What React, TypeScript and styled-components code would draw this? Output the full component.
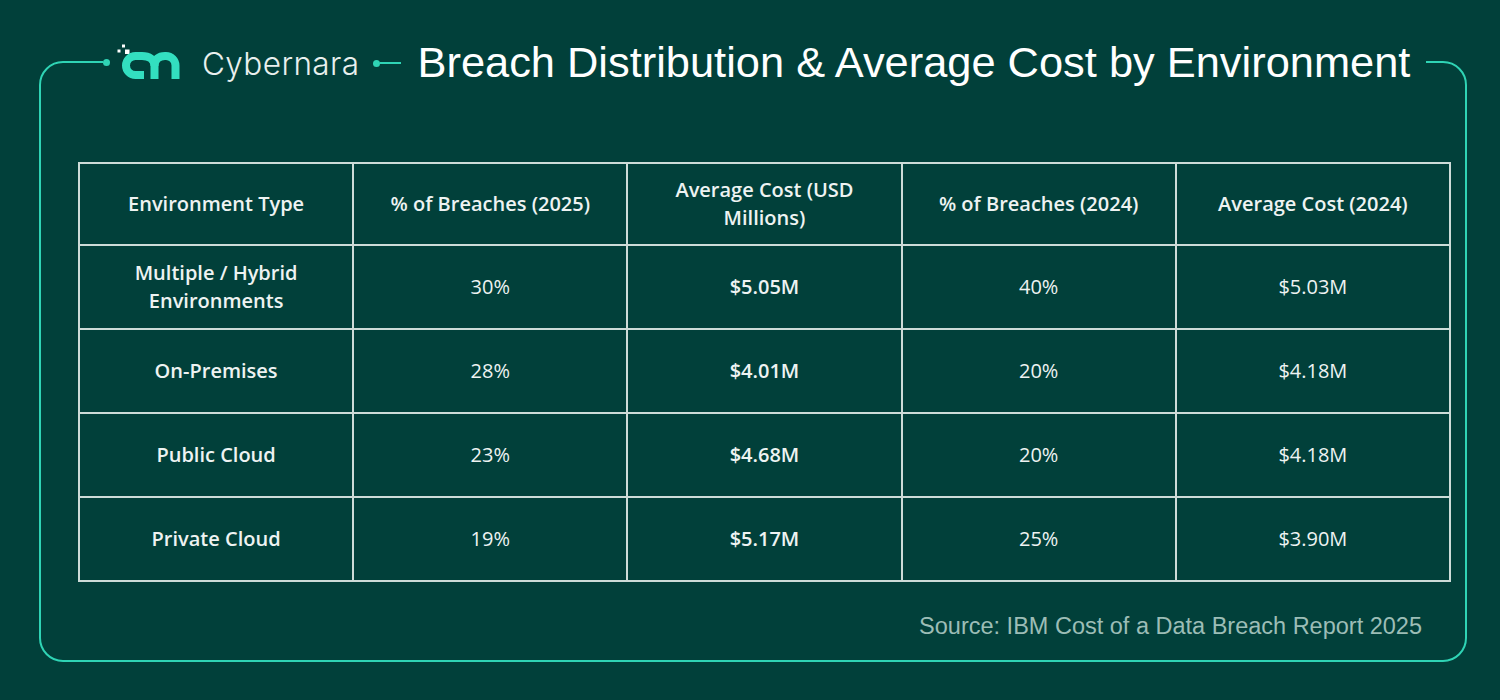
import * as React from "react";
import styled, { createGlobalStyle } from "styled-components";

const GlobalStyle = createGlobalStyle`
  html, body {
    margin: 0;
    padding: 0;
    background: #01403a;
  }
  body {
    width: 1500px;
    height: 700px;
    overflow: hidden;
  }
`;

const Page = styled.div`
  padding: 37px 33px 0 39px;
`;

const Frame = styled.fieldset`
  margin: 0;
  padding: 75px 14px 21px 37px;
  border: 2px solid #2fd4b5;
  border-radius: 24px;
  min-width: 0;
`;

const Legend = styled.legend`
  margin-left: 25px;
  padding: 0 16px 0 0;
  height: 50px;
  display: flex;
  align-items: center;
`;

const Dot = styled.span`
  width: 7px;
  height: 7px;
  border-radius: 50%;
  background: #2fd4b5;
  flex: none;
`;

const Connector = styled.span`
  display: flex;
  align-items: center;
  margin: 2px 17px 0 13px;
  &::after {
    content: "";
    width: 21px;
    height: 2px;
    background: #2fd4b5;
  }
`;

const Brand = styled.span`
  font-family: Inter, "Noto Sans", sans-serif;
  font-weight: 300;
  font-size: 31.5px;
  letter-spacing: 0.4px;
  color: #e9f0ee;
  margin: 3px 0 0 20px;
`;

const Title = styled.h1`
  margin: 0;
  font-family: "Liberation Sans", Arial, sans-serif;
  font-weight: 400;
  font-size: 43.4px;
  color: #ffffff;
  white-space: nowrap;
`;

const Table = styled.table`
  width: 1373px;
  border-collapse: collapse;
  table-layout: fixed;
  font-family: "Open Sans", "Noto Sans", sans-serif;
  font-size: 20px;
  color: #eef3f2;
`;

const Cell = styled.td<{ $strong?: boolean; $head?: boolean }>`
  border: 2px solid #cddcd8;
  text-align: center;
  vertical-align: middle;
  padding: 0 22px;
  height: ${(p) => (p.$head ? "80px" : "82px")};
  line-height: 28px;
  font-weight: ${(p) => (p.$strong ? 600 : 400)};
`;

const Source = styled.p`
  margin: 31px 29px 0 0;
  text-align: right;
  font-family: "Liberation Sans", Arial, sans-serif;
  font-size: 23.5px;
  line-height: 26px;
  color: #9cbdb6;
`;

const Logo = () => (
  <svg width="70" height="45" viewBox="116 38 70 45" style={{ marginLeft: 2 }}>
    <rect x="121.5" y="47.5" width="3" height="3" fill="#ffffff" />
    <rect x="126" y="42.5" width="3" height="3" fill="#ffffff" />
    <rect x="129" y="47.5" width="4.5" height="4.5" fill="#ffffff" />
    <g fill="none" stroke="#33dfc0" strokeWidth="8" strokeLinecap="butt" strokeLinejoin="round">
      <path d="M148 73 H139.5 A9.5 9.5 0 0 1 139.5 54 H146 C153 54 158.5 57 158.5 64 V77" />
      <path d="M158.5 64 C158.5 57 163 54 169 54 H170 A9.5 9.5 0 0 1 179.5 63.5 V77" />
    </g>
  </svg>
);

type Row = {
  env: string;
  share25: string;
  cost25: string;
  share24: string;
  cost24: string;
};

const rows: Row[] = [
  { env: "Multiple / Hybrid Environments", share25: "30%", cost25: "$5.05M", share24: "40%", cost24: "$5.03M" },
  { env: "On-Premises", share25: "28%", cost25: "$4.01M", share24: "20%", cost24: "$4.18M" },
  { env: "Public Cloud", share25: "23%", cost25: "$4.68M", share24: "20%", cost24: "$4.18M" },
  { env: "Private Cloud", share25: "19%", cost25: "$5.17M", share24: "25%", cost24: "$3.90M" },
];

const headers = [
  "Environment Type",
  "% of Breaches (2025)",
  "Average Cost (USD Millions)",
  "% of Breaches (2024)",
  "Average Cost (2024)",
];

const App = () => {
  return (
    <Page>
      <GlobalStyle />
      <Frame>
        <Legend>
          <Dot />
          <Logo />
          <Brand>Cybernara</Brand>
          <Connector>
            <Dot />
          </Connector>
          <Title>Breach Distribution &amp; Average Cost by Environment</Title>
        </Legend>
        <Table>
          <thead>
            <tr>
              {headers.map((h) => (
                <Cell as="th" key={h} $head $strong>
                  {h}
                </Cell>
              ))}
            </tr>
          </thead>
          <tbody>
            {rows.map((r) => (
              <tr key={r.env}>
                <Cell $strong>{r.env}</Cell>
                <Cell>{r.share25}</Cell>
                <Cell $strong>{r.cost25}</Cell>
                <Cell>{r.share24}</Cell>
                <Cell>{r.cost24}</Cell>
              </tr>
            ))}
          </tbody>
        </Table>
        <Source>Source: IBM Cost of a Data Breach Report 2025</Source>
      </Frame>
    </Page>
  );
};

export default App;
